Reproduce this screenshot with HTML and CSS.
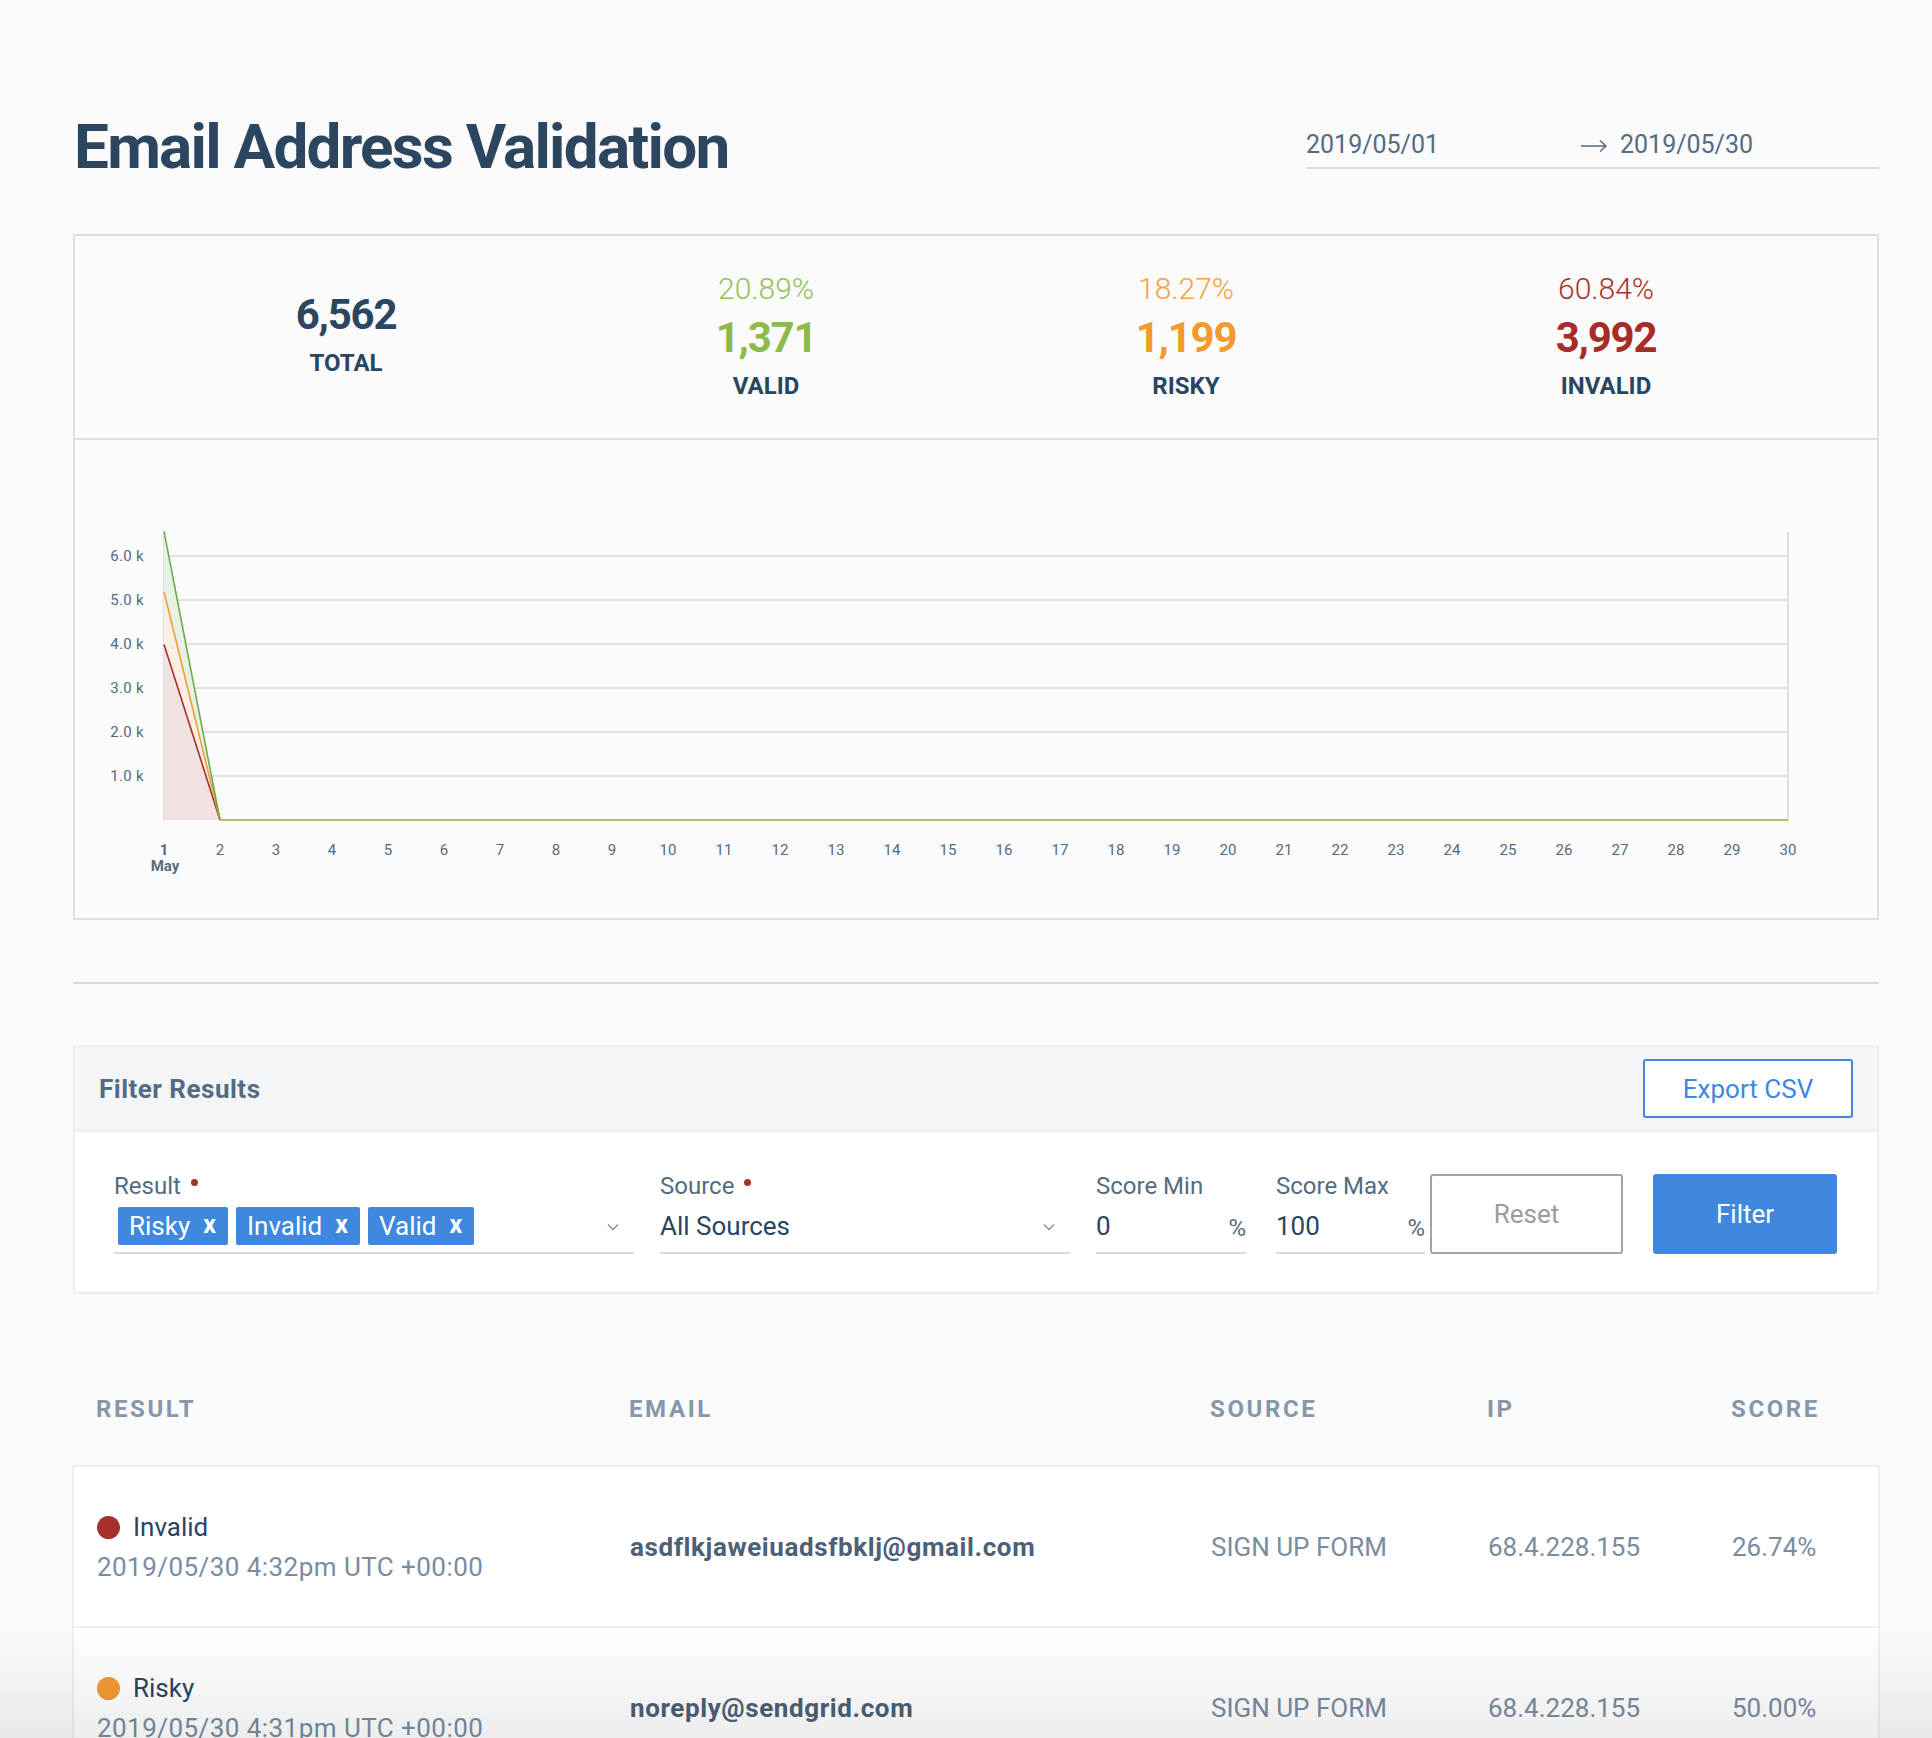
FILE: index.html
```html
<!DOCTYPE html>
<html lang="en">
<head>
<meta charset="utf-8">
<title>Email Address Validation</title>
<link rel="stylesheet" href="styles.css">
</head>
<body>
<div class="page">
  <header class="page-head">
    <h1 class="title">Email Address Validation</h1>
    <div class="date-range">
      <span class="date-from">2019/05/01</span>
      <span class="arrow"><svg width="28" height="14" viewBox="0 0 28 14"><path d="M1 7H26M20 1.5L26 7L20 12.5" fill="none" stroke="#546b81" stroke-width="1.4"/></svg></span>
      <span class="date-to">2019/05/30</span>
    </div>
  </header>

  <section class="stats">
    <div class="stat stat-total">
      <div class="stat-num total">6,562</div>
      <div class="stat-label">TOTAL</div>
    </div>
    <div class="stat">
      <div class="stat-pct valid">20.89%</div>
      <div class="stat-num valid-num">1,371</div>
      <div class="stat-label">VALID</div>
    </div>
    <div class="stat">
      <div class="stat-pct risky">18.27%</div>
      <div class="stat-num risky-num">1,199</div>
      <div class="stat-label">RISKY</div>
    </div>
    <div class="stat">
      <div class="stat-pct invalid">60.84%</div>
      <div class="stat-num invalid-num">3,992</div>
      <div class="stat-label">INVALID</div>
    </div>
  </section>

  <section class="chart">
    <svg width="1802" height="478" viewBox="0 0 1802 478" class="chart-svg">
      <g class="grid">
        <line x1="89" y1="116" x2="1713" y2="116"/>
        <line x1="89" y1="160" x2="1713" y2="160"/>
        <line x1="89" y1="204" x2="1713" y2="204"/>
        <line x1="89" y1="248" x2="1713" y2="248"/>
        <line x1="89" y1="292" x2="1713" y2="292"/>
        <line x1="89" y1="336" x2="1713" y2="336"/>
        <line x1="89" y1="92" x2="89" y2="381"/>
        <line x1="1713" y1="92" x2="1713" y2="381"/>
      </g>
      <polygon points="89,151.6 89,91.3 145,380" fill="#e8f1e5"/>
      <polygon points="89,204.4 89,151.6 145,380" fill="#fbeee2"/>
      <polygon points="89,380 89,204.4 145,380" fill="#f2e3e3"/>
      <line x1="89" y1="204.4" x2="145" y2="380" stroke="#a8302b" stroke-width="1.6"/>
      <line x1="89" y1="151.6" x2="145" y2="380" stroke="#f19d35" stroke-width="1.6"/>
      <line x1="89" y1="91.3" x2="145" y2="380" stroke="#6cab4b" stroke-width="1.6"/>
      <line x1="145" y1="380" x2="1713" y2="380" stroke="#8fae45" stroke-width="1.6"/>
      <g class="ylabels">
        <text x="69" y="121">6.0 k</text>
        <text x="69" y="165">5.0 k</text>
        <text x="69" y="209">4.0 k</text>
        <text x="69" y="253">3.0 k</text>
        <text x="69" y="297">2.0 k</text>
        <text x="69" y="341">1.0 k</text>
      </g>
      <g class="xlabels">
        <text x="89" y="415" class="bold">1</text>
        <text x="90" y="431" class="bold">May</text>
        <text x="145" y="415">2</text>
        <text x="201" y="415">3</text>
        <text x="257" y="415">4</text>
        <text x="313" y="415">5</text>
        <text x="369" y="415">6</text>
        <text x="425" y="415">7</text>
        <text x="481" y="415">8</text>
        <text x="537" y="415">9</text>
        <text x="593" y="415">10</text>
        <text x="649" y="415">11</text>
        <text x="705" y="415">12</text>
        <text x="761" y="415">13</text>
        <text x="817" y="415">14</text>
        <text x="873" y="415">15</text>
        <text x="929" y="415">16</text>
        <text x="985" y="415">17</text>
        <text x="1041" y="415">18</text>
        <text x="1097" y="415">19</text>
        <text x="1153" y="415">20</text>
        <text x="1209" y="415">21</text>
        <text x="1265" y="415">22</text>
        <text x="1321" y="415">23</text>
        <text x="1377" y="415">24</text>
        <text x="1433" y="415">25</text>
        <text x="1489" y="415">26</text>
        <text x="1545" y="415">27</text>
        <text x="1601" y="415">28</text>
        <text x="1657" y="415">29</text>
        <text x="1713" y="415">30</text>
      </g>
    </svg>
  </section>

  <hr class="divider">

  <section class="filter">
    <div class="filter-head">
      <h2 class="filter-title">Filter Results</h2>
      <button class="btn btn-outline">Export CSV</button>
    </div>
    <div class="filter-body">
      <div class="field f-result">
        <div class="field-label">Result <span class="req"></span></div>
        <div class="field-control">
          <span class="tag">Risky <b class="tag-x">x</b></span>
          <span class="tag">Invalid <b class="tag-x">x</b></span>
          <span class="tag">Valid <b class="tag-x">x</b></span>
          <span class="chev"><svg width="12" height="8" viewBox="0 0 12 8"><path d="M1 1.5L6 6.5L11 1.5" fill="none" stroke="#7d8ea1" stroke-width="1.3"/></svg></span>
        </div>
      </div>
      <div class="field f-source">
        <div class="field-label">Source <span class="req"></span></div>
        <div class="field-control">
          <span class="value">All Sources</span>
          <span class="chev"><svg width="12" height="8" viewBox="0 0 12 8"><path d="M1 1.5L6 6.5L11 1.5" fill="none" stroke="#7d8ea1" stroke-width="1.3"/></svg></span>
        </div>
      </div>
      <div class="field f-min">
        <div class="field-label">Score Min</div>
        <div class="field-control">
          <span class="value">0</span>
          <span class="unit">%</span>
        </div>
      </div>
      <div class="field f-max">
        <div class="field-label">Score Max</div>
        <div class="field-control">
          <span class="value">100</span>
          <span class="unit">%</span>
        </div>
      </div>
      <button class="btn btn-reset">Reset</button>
      <button class="btn btn-primary">Filter</button>
    </div>
  </section>

  <section class="results">
    <div class="thead">
      <div>RESULT</div>
      <div>EMAIL</div>
      <div>SOURCE</div>
      <div>IP</div>
      <div>SCORE</div>
    </div>
    <div class="tbody">
      <div class="row">
        <div class="c-result">
          <div class="status"><span class="dot dot-invalid"></span>Invalid</div>
          <div class="when">2019/05/30 4:32pm UTC +00:00</div>
        </div>
        <div class="c-email">asdflkjaweiuadsfbklj@gmail.com</div>
        <div class="c-muted">SIGN UP FORM</div>
        <div class="c-muted">68.4.228.155</div>
        <div class="c-muted">26.74%</div>
      </div>
      <div class="row">
        <div class="c-result">
          <div class="status"><span class="dot dot-risky"></span>Risky</div>
          <div class="when">2019/05/30 4:31pm UTC +00:00</div>
        </div>
        <div class="c-email">noreply@sendgrid.com</div>
        <div class="c-muted">SIGN UP FORM</div>
        <div class="c-muted">68.4.228.155</div>
        <div class="c-muted">50.00%</div>
      </div>
    </div>
  </section>
</div>
<div class="fade"></div>
</body>
</html>
```

FILE: styles.css
```css
* { box-sizing: border-box; margin: 0; padding: 0; }

body {
  background: #fbfbfc;
  font-family: Roboto, "Liberation Sans", sans-serif;
  color: #294661;
}

.page {
  width: 1806px;
  margin-left: 73px;
  padding-top: 110px;
  padding-bottom: 40px;
}

/* header */
.page-head {
  display: flex;
  justify-content: space-between;
  align-items: flex-start;
}
.title {
  font-size: 62px;
  line-height: 74px;
  font-weight: 700;
  letter-spacing: -1.75px;
  color: #2c4660;
  margin-left: 1px;
}
.date-range {
  width: 573px;
  margin-top: 19px;
  padding-bottom: 6px;
  border-bottom: 2px solid #d7dce1;
  display: flex;
  align-items: center;
  font-size: 25px;
  line-height: 32px;
  color: #546b81;
}
.date-from { width: 274px; }
.arrow { width: 40px; display: flex; align-items: center; padding-top: 2px; }

/* stats */
.stats {
  margin-top: 50px;
  height: 206px;
  border: 2px solid #dde1e5;
  display: grid;
  grid-template-columns: repeat(4, 1fr);
  align-items: center;
  padding: 0 61px;
}
.stat { text-align: center; }
.stat-total { padding-bottom: 10px; }
.stat-pct {
  font-size: 30px;
  font-weight: 300;
  line-height: 36px;
}
.stat-num {
  font-size: 42px;
  font-weight: 700;
  line-height: 62px;
  letter-spacing: -1.2px;
}
.stat-label {
  font-size: 24px;
  font-weight: 700;
  line-height: 34px;
  color: #294661;
}
.total { color: #2c4660; }
.valid { color: #95c05a; }
.valid-num { color: #8dba4b; }
.risky { color: #f3a23c; }
.risky-num { color: #f09b2f; }
.invalid { color: #aa332e; }
.invalid-num { color: #a72b26; }

/* chart */
.chart {
  height: 480px;
  border: 2px solid #dde1e5;
  border-top: 0;
}
.chart-svg { display: block; }
.grid line { stroke: #dde1e5; stroke-width: 2; }
.ylabels text {
  font-family: Roboto, "Liberation Sans", sans-serif;
  font-size: 15px;
  fill: #546b81;
  text-anchor: end;
  letter-spacing: 0.3px;
}
.xlabels text {
  font-family: Roboto, "Liberation Sans", sans-serif;
  font-size: 15px;
  fill: #546b81;
  text-anchor: middle;
}
.xlabels text.bold { font-weight: 700; }

.divider {
  margin-top: 62px;
  border: 0;
  height: 2px;
  background: #d7dce1;
}

/* filter */
.filter {
  margin-top: 61px;
  border: 2px solid #eceef1;
  background: #fff;
}
.filter-head {
  height: 85px;
  background: #f4f5f7;
  border-bottom: 2px solid #eceef1;
  display: flex;
  justify-content: space-between;
  align-items: center;
  padding: 0 24px;
}
.filter-title {
  font-size: 26px;
  font-weight: 700;
  letter-spacing: 0.5px;
  color: #546b81;
}
.btn {
  font-family: Roboto, "Liberation Sans", sans-serif;
  font-size: 26px;
  border-radius: 3px;
  cursor: pointer;
}
.btn-outline {
  width: 210px;
  height: 59px;
  background: #fff;
  border: 2px solid #3f88dd;
  color: #3f88dd;
}
.filter-body {
  display: flex;
  align-items: flex-end;
  padding: 41px 40px 38px 39px;
}
.field { display: flex; flex-direction: column; }
.field-label {
  font-size: 24px;
  line-height: 26px;
  color: #546b81;
  display: flex;
  align-items: center;
}
.req {
  width: 7px;
  height: 7px;
  border-radius: 50%;
  background: #a8302b;
  margin-left: 10px;
  margin-top: -8px;
}
.field-control {
  height: 55px;
  border-bottom: 2px solid #d7dce1;
  display: flex;
  align-items: center;
  font-size: 26px;
  color: #294661;
}
.f-result { width: 520px; }
.f-source { width: 410px; margin-left: 26px; }
.f-min { width: 150px; margin-left: 26px; }
.f-max { width: 149px; margin-left: 30px; }
.f-result .field-control { padding-left: 4px; }
.tag {
  display: inline-flex;
  align-items: center;
  height: 38px;
  background: #3f88dd;
  color: #fff;
  border-radius: 2px;
  padding: 0 12px 0 11px;
  margin-right: 8px;
  font-size: 26px;
}
.tag-x {
  font-size: 25px;
  font-weight: 700;
  margin-left: 13px;
  line-height: 1;
  margin-top: -3px;
}
.chev {
  margin-left: auto;
  margin-right: 15px;
  display: flex;
  padding-top: 2px;
}
.unit {
  margin-left: auto;
  font-size: 24px;
  color: #546b81;
  padding-top: 4px;
}
.btn-reset {
  width: 193px;
  height: 80px;
  margin-left: 5px;
  background: #fff;
  border: 2px solid #a3a3a3;
  color: #9c9c9c;
}
.btn-primary {
  width: 184px;
  height: 80px;
  margin-left: 30px;
  background: #3f88dd;
  border: 0;
  color: #fff;
}

/* results */
.results { margin-top: 70px; }
.thead {
  height: 101px;
  display: grid;
  grid-template-columns: 533px 581px 277px 244px 1fr;
  padding: 31px 24px 0 23px;
  font-size: 24px;
  line-height: 28px;
  font-weight: 700;
  letter-spacing: 2.6px;
  color: #8796a8;
}
.tbody {
  margin-left: -1px;
  width: 1808px;
  border: 2px solid #eceef1;
  border-bottom: 0;
  background: #fff;
}
.row {
  display: grid;
  grid-template-columns: 533px 581px 277px 244px 1fr;
  align-items: center;
  padding: 43px 24px 42px 23px;
  border-bottom: 2px solid #eceef1;
  font-size: 26px;
}
.status {
  display: flex;
  align-items: center;
  line-height: 34px;
  color: #294661;
}
.dot {
  width: 23px;
  height: 23px;
  border-radius: 50%;
  margin-right: 13px;
}
.dot-invalid { background: #a8302b; }
.dot-risky { background: #f09c35; }
.when {
  margin-top: 6px;
  line-height: 34px;
  color: #7a8c9f;
  letter-spacing: 0.45px;
}
.c-email {
  font-weight: 700;
  font-size: 26px;
  letter-spacing: 0.6px;
  color: #4d6075;
}
.c-muted { color: #7a8c9f; }

.fade {
  position: fixed;
  left: 0;
  right: 0;
  bottom: 0;
  height: 110px;
  pointer-events: none;
  background: linear-gradient(to bottom, rgba(0,0,0,0), rgba(0,0,0,0.07));
}
```
